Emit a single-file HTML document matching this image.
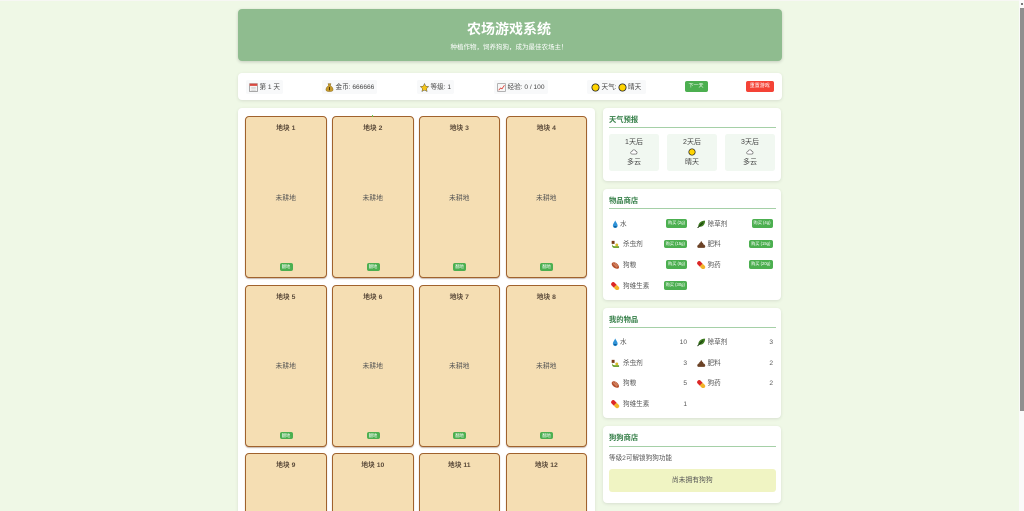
<!DOCTYPE html>
<html lang="zh"><head><meta charset="utf-8"><title>农场游戏系统</title>
<style>
html,body{margin:0;padding:0;width:1024px;height:511px;overflow:hidden;background:#eff8e6}
body{position:relative;font-family:"Liberation Sans","Noto Sans CJK SC",sans-serif;color:#444;font-size:7px}
div,svg{position:absolute;box-sizing:border-box}
.t{white-space:nowrap;line-height:10px;height:10px}
.c{text-align:center}
.card{background:#fff;border-radius:4px;box-shadow:0 1px 3px rgba(0,0,0,.1)}
.plot{width:81.5px;height:162px;background:#f5deb3;border:1px solid #a0622d;border-radius:4px;box-shadow:0 1px 1px rgba(90,50,20,.35)}
.pt{left:0;width:100%;text-align:center;top:7px;font-weight:700;color:#5a4a3a;font-size:6.8px;line-height:10px;white-space:nowrap}
.pm{left:0;width:100%;text-align:center;top:76.5px;color:#555;font-size:6.8px;line-height:10px;white-space:nowrap}
.pb{left:33.5px;top:146px;width:13px;height:7.5px;background:#4caf50;border-radius:2px;color:#fff;font-size:4.3px;line-height:7.5px;text-align:center;white-space:nowrap}
.h{left:6px;top:6.5px;font-size:7.3px;font-weight:700;color:#357f48;line-height:10px;white-space:nowrap}
.l{left:6px;width:166.5px;top:19px;height:1px;background:#a5d0a7}
.chip{background:#f8f9fa;border-radius:2px;height:14px;top:6.5px}
.chip .t{color:#444;font-size:6.6px;top:3px}
.buy{height:8.5px;background:#4caf50;border-radius:2px;color:#fff;font-size:4.2px;line-height:8.5px;text-align:center;white-space:nowrap}
.n{color:#555;font-size:6.6px;line-height:10px;white-space:nowrap}
.w{top:26px;width:50px;height:37px;background:#f1f8f1;border-radius:2.5px}
</style></head><body>
<svg width="0" height="0" style="left:0;top:0">
<defs>
<symbol id="drop" viewBox="0 0 10 10"><path d="M5 .5C4.400 2.400 2.200 4.600 2.200 6.700a2.800 2.800 0 0 0 5.600 0C7.800 4.600 5.600 2.400 5 .5z" fill="#2f93d8"/><path d="M3.300 7.100a1.700 1.700 0 0 0 3.400 0" fill="#125f99"/></symbol>
<symbol id="leaf" viewBox="0 0 10 10"><path d="M1.500 8C1.500 4 4 1 9.500.8c0 4.800-2.800 7.600-6.800 7.200z" fill="#3c7a1e"/><path d="M.6 9.500 6.800 3.200" stroke="#12300a" stroke-width="1"/></symbol>
<symbol id="bug" viewBox="0 0 10 10"><path d="M.8 1h3.400v3.600H.8z" fill="#7a3b17"/><path d="M1.500 4.500c0 2 1 2.800 3 2.800H9.500v2H4C2 9.300 .8 7.500 1.500 4.500z" fill="#5f9a1b"/><circle cx="6.800" cy="5.800" r="1.700" fill="#d9b92a"/></symbol>
<symbol id="poop" viewBox="0 0 10 10"><path d="M5 1 6.200 3.200c1 .2 1.400 1 1.100 1.800 1.200.2 2.400 1.300 2.400 2.600S8.700 9.300 7.700 9.300H2.300C1.300 9.300.3 8.800.3 7.600s1.200-2.400 2.400-2.600C2.400 4.200 2.800 3.400 3.800 3.200z" fill="#6b4226"/></symbol>
<symbol id="meat" viewBox="0 0 10 10"><path d="M1 2.800C2.200.9 5 1.200 7.200 3.300s2.900 4.600 1.500 5.500C7.300 9.700 4.400 8.900 2.400 6.900 1.100 5.600.5 4 1 2.800z" fill="#b5502e"/><path d="M2.500 3 7 7.500M4.500 2.500 8 6.300" stroke="#e3a27f" stroke-width=".8"/></symbol>
<symbol id="pill" viewBox="0 0 10 10"><path d="M.9 4.300A2.300 2.300 0 0 1 4.300.9L6.600 3.200 3.200 6.600z" fill="#dc2626"/><path d="M3.200 6.600 6.600 3.200 8.900 5.500A2.400 2.400 0 0 1 5.500 8.900z" fill="#f2b32a"/></symbol>
<symbol id="sun" viewBox="0 0 10 10"><circle cx="5" cy="5" r="4" fill="#ffd400" stroke="#222" stroke-width=".9"/></symbol>
<symbol id="cloud" viewBox="0 0 10 10"><path d="M2.600 7.600a1.600 1.600 0 0 1-.2-3.200 2.500 2.500 0 0 1 4.800-.5 1.900 1.900 0 0 1 .3 3.700z" fill="#fff" stroke="#555" stroke-width=".7"/></symbol>
<symbol id="cal" viewBox="0 0 10 10"><rect x=".7" y=".7" width="8.600" height="8.800" fill="#f4f4f4" stroke="#666" stroke-width=".6"/><rect x=".7" y=".7" width="8.600" height="2.500" fill="#d8483f"/><path d="M2.500 5h5M2.500 6.500h5M2.500 8h5" stroke="#aaa" stroke-width=".4"/></symbol>
<symbol id="bag" viewBox="0 0 10 10"><path d="M3.300.7h3.400L6 3c2 1 3 2.800 3 4.300C9 8.900 7.600 9.500 5 9.500S1 8.900 1 7.300C1 5.800 2 4 4 3z" fill="#c79a2a" stroke="#6b4f10" stroke-width=".4"/><path d="M5 4.500v3.500" stroke="#3f2c05" stroke-width="1"/></symbol>
<symbol id="star" viewBox="0 0 10 10"><path d="M5 .5 6.400 3.500 9.700 3.900 7.300 6.200 7.900 9.500 5 7.900 2.100 9.500 2.700 6.200.3 3.900 3.600 3.500z" fill="#f5c518" stroke="#444" stroke-width=".5"/></symbol>
<symbol id="chart" viewBox="0 0 10 10"><rect x=".7" y=".7" width="8.600" height="8.600" fill="#f7f7f7" stroke="#777" stroke-width=".6"/><path d="M1.800 8 4 5.500 5.500 6.500 8.300 2.500" fill="none" stroke="#d9342b" stroke-width=".8"/></symbol>
</defs></svg>

<div style="left:0;top:0;width:1024px;height:1px;background:#f7f7f4"></div>

<div style="left:237.500px;top:9px;width:544px;height:52px;background:#8fbc8f;border-radius:4px;box-shadow:0 1px 3px rgba(0,0,0,.18)"></div>
<div class="c" style="left:237px;top:18.500px;width:544px;color:#fff;font-size:14px;font-weight:700;line-height:20px;white-space:nowrap">农场游戏系统</div>
<div class="c" style="left:237px;top:43px;width:544px;color:#fff;font-size:6.500px;line-height:10px;white-space:nowrap">种植作物，饲养狗狗，成为最佳农场主！</div>

<div class="card" style="left:237.500px;top:73px;width:544px;height:27px">
 <div class="chip" style="left:8px;width:37px"><svg style="left:3.500px;top:3px" width="9" height="9"><use href="#cal"/></svg><div class="t" style="left:14px">第 1 天</div></div>
 <div class="chip" style="left:84px;width:55px"><svg style="left:3.500px;top:3px" width="9" height="9"><use href="#bag"/></svg><div class="t" style="left:14px">金币: 666666</div></div>
 <div class="chip" style="left:179px;width:37px"><svg style="left:3.500px;top:3px" width="9" height="9"><use href="#star"/></svg><div class="t" style="left:14px">等级: 1</div></div>
 <div class="chip" style="left:256px;width:54px"><svg style="left:3.500px;top:3px" width="9" height="9"><use href="#chart"/></svg><div class="t" style="left:14px">经验: 0 / 100</div></div>
 <div class="chip" style="left:349.500px;width:59px"><svg style="left:3.500px;top:3px" width="9" height="9"><use href="#sun"/></svg><div class="t" style="left:14.500px">天气:</div><svg style="left:30.500px;top:3px" width="9" height="9"><use href="#sun"/></svg><div class="t" style="left:41px">晴天</div></div>
 <div class="buy" style="left:447px;top:8px;width:23px;height:11px;line-height:11px;font-size:5px">下一天</div>
 <div class="buy" style="left:508.500px;top:8px;width:27.500px;height:11px;line-height:11px;font-size:5px;background:#f44336">重置游戏</div>
</div>

<div style="left:237.500px;top:108px;width:357.500px;height:420px;background:#fff;border-radius:4px;box-shadow:0 1px 3px rgba(0,0,0,.1)"></div>

<div class="plot" style="left:245px;top:116px"><div class="pt">地块 1</div><div class="pm">未耕地</div><div class="pb">翻地</div></div>
<div class="plot" style="left:332px;top:116px"><div class="pt">地块 2</div><div class="pm">未耕地</div><div class="pb">翻地</div></div>
<div class="plot" style="left:418.500px;top:116px"><div class="pt">地块 3</div><div class="pm">未耕地</div><div class="pb">翻地</div></div>
<div class="plot" style="left:505.500px;top:116px"><div class="pt">地块 4</div><div class="pm">未耕地</div><div class="pb">翻地</div></div>
<div class="plot" style="left:245px;top:284.500px"><div class="pt">地块 5</div><div class="pm">未耕地</div><div class="pb">翻地</div></div>
<div class="plot" style="left:332px;top:284.500px"><div class="pt">地块 6</div><div class="pm">未耕地</div><div class="pb">翻地</div></div>
<div class="plot" style="left:418.500px;top:284.500px"><div class="pt">地块 7</div><div class="pm">未耕地</div><div class="pb">翻地</div></div>
<div class="plot" style="left:505.500px;top:284.500px"><div class="pt">地块 8</div><div class="pm">未耕地</div><div class="pb">翻地</div></div>
<div class="plot" style="left:245px;top:453px"><div class="pt">地块 9</div></div>
<div class="plot" style="left:332px;top:453px"><div class="pt">地块 10</div></div>
<div class="plot" style="left:418.500px;top:453px"><div class="pt">地块 11</div></div>
<div class="plot" style="left:505.500px;top:453px"><div class="pt">地块 12</div></div>
<div style="left:372px;top:115px;width:1px;height:2px;background:#6cc24a"></div>

<!-- weather -->
<div class="card" style="left:603px;top:108px;width:178px;height:73px">
 <div class="h">天气预报</div><div class="l"></div>
 <div class="w" style="left:6px"><div class="t c" style="left:0;width:100%;top:4px">1天后</div><svg style="left:21px;top:14px" width="8" height="8"><use href="#cloud"/></svg><div class="t c" style="left:0;width:100%;top:23.500px">多云</div></div>
 <div class="w" style="left:64px"><div class="t c" style="left:0;width:100%;top:4px">2天后</div><svg style="left:21px;top:14px" width="8" height="8"><use href="#sun"/></svg><div class="t c" style="left:0;width:100%;top:23.500px">晴天</div></div>
 <div class="w" style="left:122px"><div class="t c" style="left:0;width:100%;top:4px">3天后</div><svg style="left:21px;top:14px" width="8" height="8"><use href="#cloud"/></svg><div class="t c" style="left:0;width:100%;top:23.500px">多云</div></div>
</div>

<!-- shop -->
<div class="card" style="left:603px;top:189px;width:178px;height:110.500px">
 <div class="h">物品商店</div><div class="l"></div>
 <svg style="left:8px;top:30.500px" width="8.500" height="8.500"><use href="#drop"/></svg><div class="n" style="left:17px;top:30.500px">水</div><div class="buy" style="left:63px;top:30px;width:21px">购买 (2g)</div>
 <svg style="left:94px;top:30.500px" width="8.500" height="8.500"><use href="#leaf"/></svg><div class="n" style="left:104.500px;top:30.500px">除草剂</div><div class="buy" style="left:148.500px;top:30px;width:21px">购买 (4g)</div>
 <svg style="left:8px;top:51px" width="8.500" height="8.500"><use href="#bug"/></svg><div class="n" style="left:20px;top:51px">杀虫剂</div><div class="buy" style="left:60.500px;top:50.500px;width:23.500px">购买 (15g)</div>
 <svg style="left:94px;top:51px" width="8.500" height="8.500"><use href="#poop"/></svg><div class="n" style="left:104.500px;top:51px">肥料</div><div class="buy" style="left:146px;top:50.500px;width:23.500px">购买 (15g)</div>
 <svg style="left:8px;top:71.500px" width="8.500" height="8.500"><use href="#meat"/></svg><div class="n" style="left:20px;top:71.500px">狗粮</div><div class="buy" style="left:63px;top:71px;width:21px">购买 (8g)</div>
 <svg style="left:94px;top:71.500px" width="8.500" height="8.500"><use href="#pill"/></svg><div class="n" style="left:104.500px;top:71.500px">狗药</div><div class="buy" style="left:146px;top:71px;width:23.500px">购买 (20g)</div>
 <svg style="left:8px;top:92.500px" width="8.500" height="8.500"><use href="#pill"/></svg><div class="n" style="left:20px;top:92.500px">狗维生素</div><div class="buy" style="left:60.500px;top:92px;width:23.500px">购买 (30g)</div>
</div>

<!-- inventory -->
<div class="card" style="left:603px;top:308px;width:178px;height:110px">
 <div class="h">我的物品</div><div class="l"></div>
 <svg style="left:8px;top:30px" width="8.500" height="8.500"><use href="#drop"/></svg><div class="n" style="left:17px;top:29.500px">水</div><div class="n" style="left:60px;width:24px;text-align:right;top:29.500px">10</div>
 <svg style="left:94px;top:30px" width="8.500" height="8.500"><use href="#leaf"/></svg><div class="n" style="left:104.500px;top:29.500px">除草剂</div><div class="n" style="left:146px;width:24px;text-align:right;top:29.500px">3</div>
 <svg style="left:8px;top:51px" width="8.500" height="8.500"><use href="#bug"/></svg><div class="n" style="left:20px;top:50.500px">杀虫剂</div><div class="n" style="left:60px;width:24px;text-align:right;top:50.500px">3</div>
 <svg style="left:94px;top:51px" width="8.500" height="8.500"><use href="#poop"/></svg><div class="n" style="left:104.500px;top:50.500px">肥料</div><div class="n" style="left:146px;width:24px;text-align:right;top:50.500px">2</div>
 <svg style="left:8px;top:71.500px" width="8.500" height="8.500"><use href="#meat"/></svg><div class="n" style="left:20px;top:71px">狗粮</div><div class="n" style="left:60px;width:24px;text-align:right;top:71px">5</div>
 <svg style="left:94px;top:71.500px" width="8.500" height="8.500"><use href="#pill"/></svg><div class="n" style="left:104.500px;top:71px">狗药</div><div class="n" style="left:146px;width:24px;text-align:right;top:71px">2</div>
 <svg style="left:8px;top:92px" width="8.500" height="8.500"><use href="#pill"/></svg><div class="n" style="left:20px;top:91.500px">狗维生素</div><div class="n" style="left:60px;width:24px;text-align:right;top:91.500px">1</div>
</div>

<!-- dog -->
<div class="card" style="left:603px;top:426px;width:178px;height:77px">
 <div class="h" style="top:7px">狗狗商店</div><div class="l" style="top:20px"></div>
 <div class="n" style="left:6px;top:27.500px">等级2可解锁狗狗功能</div>
 <div class="c" style="left:6px;top:42.500px;width:166.500px;height:23px;background:#f0f4c3;border-radius:3px;line-height:23px;font-size:6.800px;color:#555">尚未拥有狗狗</div>
</div>

<!-- scrollbar -->
<div style="left:1019px;top:0;width:5px;height:511px;background:#fafafa"></div>
<div style="left:1020px;top:8px;width:3.500px;height:403px;background:#8f8f8f"></div>
<div style="left:1020.500px;top:3px;width:2.500px;height:2px;background:#777"></div>
</body></html>
